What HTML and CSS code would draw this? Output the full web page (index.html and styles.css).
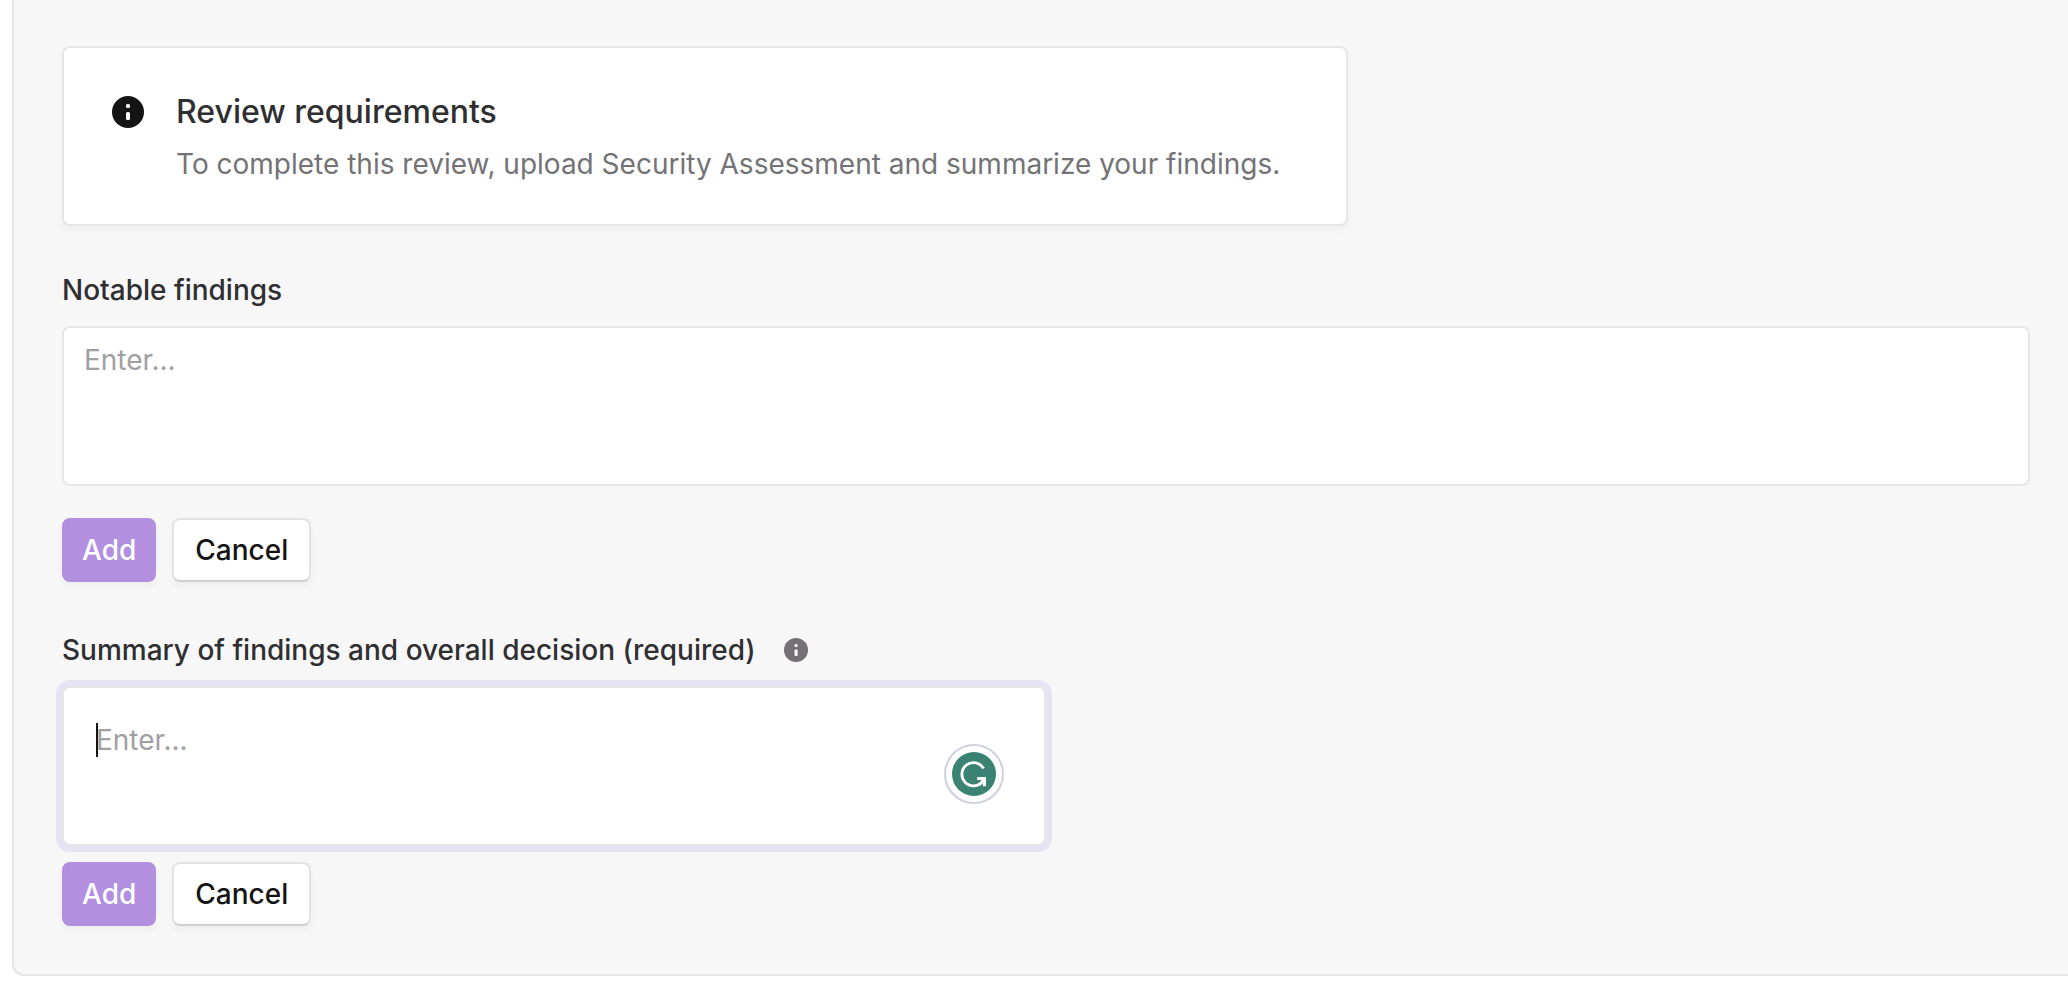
FILE: index.html
```
<!DOCTYPE html>
<html lang="en">
<head>
    <meta charset="UTF-8">
    <meta name="viewport" content="width=device-width, initial-scale=1.0">
    <title>Security review</title>
    <link rel="stylesheet" href="styles.css">
</head>
<body>
    <main class="panel">
        <section class="notice">
            <svg class="notice-icon" viewBox="0 0 32 32" aria-hidden="true">
                <circle cx="16" cy="16" r="16" fill="#141414"/>
                <rect x="14" y="8" width="4" height="4" rx="1.5" fill="#fff"/>
                <rect x="14" y="16" width="4" height="8" rx="1.5" fill="#fff"/>
            </svg>
            <div>
                <h2 class="notice-title">Review requirements</h2>
                <p class="notice-text">To complete this review, upload Security Assessment and summarize your findings.</p>
            </div>
        </section>

        <form class="field">
            <label class="field-label" for="findings">Notable findings</label>
            <textarea class="textarea" id="findings" placeholder="Enter..."></textarea>
            <div class="actions">
                <button type="button" class="btn btn-primary">Add</button>
                <button type="button" class="btn btn-secondary">Cancel</button>
            </div>
        </form>

        <form class="field field-summary">
            <div class="label-row">
                <label class="field-label" for="summary">Summary of findings and overall decision (required)</label>
                <svg class="label-icon" viewBox="0 0 24 24" aria-hidden="true">
                    <circle cx="12" cy="12" r="12" fill="#737175"/>
                    <rect x="10.5" y="6" width="3.2" height="3" rx="1" fill="#f7f7f7"/>
                    <rect x="10.5" y="11.5" width="3.2" height="6.5" rx="1" fill="#f7f7f7"/>
                </svg>
            </div>
            <div class="editor">
                <textarea class="textarea textarea-focused" id="summary" placeholder="Enter..."></textarea>
                <span class="caret"></span>
                <button type="button" class="grammar" aria-label="Check writing">
                    <svg class="grammar-icon" viewBox="0 0 44 44" aria-hidden="true">
                        <circle cx="22" cy="22" r="22" fill="#398274"/>
                        <path d="M31.6 16.5A11.6 11.6 0 1 0 30.5 29.5L32.5 27" fill="none" stroke="#fff" stroke-width="2.8"/>
                        <path d="M25.2 25h8.8v9.2h-3.2l0-4.6-2-1.6h-3.6z" fill="#fff"/>
                    </svg>
                </button>
            </div>
            <div class="actions">
                <button type="button" class="btn btn-primary">Add</button>
                <button type="button" class="btn btn-secondary">Cancel</button>
            </div>
        </form>
    </main>
</body>
</html>
```
FILE: styles.css
```
* {
    box-sizing: border-box;
}
body {
    margin: 0;
    font-family: Inter, sans-serif;
    font-size: 28px;
    line-height: 40px;
    color: #2f2f31;
    background-color: #fff;
}
.panel {
    margin-left: 12px;
    padding: 46px 38px 48px 48px;
    background-color: #f7f7f7;
    border-left: 2px solid #e6e6e6;
    border-bottom: 2px solid #e6e6e6;
    border-bottom-left-radius: 12px;
}
.notice {
    display: flex;
    gap: 32px;
    width: fit-content;
    padding: 44px 66px 40px 48px;
    background-color: #fff;
    border: 2px solid #e6e6e6;
    border-radius: 8px;
    box-shadow: 0 4px 8px rgba(0, 0, 0, 0.04);
}
.notice-icon {
    flex: none;
    width: 32px;
    height: 32px;
    margin-top: 4px;
}
.notice-title {
    margin: 0 0 12px;
    font-size: 32px;
    font-weight: 500;
}
.notice-text {
    margin: 0;
    color: #737375;
}
.field {
    margin-top: 44px;
}
.field-label {
    display: block;
    font-weight: 500;
}
.label-row {
    display: flex;
    align-items: center;
    gap: 28px;
}
.label-icon {
    width: 24px;
    height: 24px;
}
.textarea {
    display: block;
    width: 100%;
    height: 160px;
    margin-top: 16px;
    padding: 12px 20px;
    font: inherit;
    color: #141414;
    background-color: #fff;
    border: 2px solid #e6e6e6;
    border-radius: 8px;
    outline: none;
    resize: none;
}
.textarea::placeholder {
    color: #a0a0a3;
}
.editor {
    position: relative;
    width: 50%;
}
.textarea-focused {
    padding: 32px;
    caret-color: transparent;
    box-shadow: 0 0 0 6px #e6e4f4;
}
.caret {
    position: absolute;
    top: 37px;
    left: 34px;
    width: 2px;
    height: 34px;
    background-color: #141414;
}
.grammar {
    position: absolute;
    right: 42px;
    bottom: 42px;
    width: 60px;
    height: 60px;
    padding: 6px;
    background-color: #fff;
    border: 2px solid #cfd1de;
    border-radius: 50%;
}
.grammar-icon {
    display: block;
    width: 44px;
    height: 44px;
}
.actions {
    display: flex;
    gap: 16px;
    margin-top: 32px;
}
.field-summary {
    margin-top: 48px;
}
.field-summary .actions {
    margin-top: 16px;
}
.btn {
    height: 64px;
    padding: 0 21px;
    font: inherit;
    font-weight: 500;
    border: 2px solid #e2e2e2;
    border-radius: 8px;
    box-shadow: 0 4px 8px rgba(0, 0, 0, 0.04);
    cursor: pointer;
}
.btn-primary {
    padding: 0 18px;
    color: #fff;
    background-color: #b38fdf;
    border-color: #b38fdf;
}
.btn-secondary {
    color: #141414;
    background-color: #fff;
    border-bottom-color: #cfcfd1;
}
```
